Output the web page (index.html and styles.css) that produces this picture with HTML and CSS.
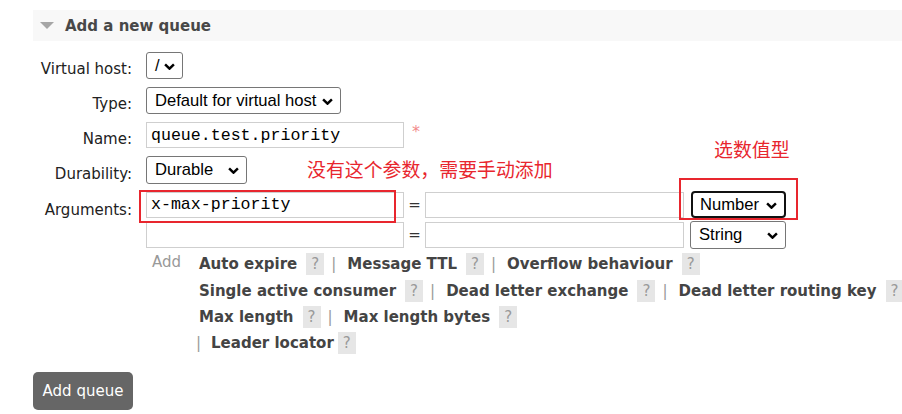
FILE: index.html
```html
<!DOCTYPE html>
<html>
<head>
<meta charset="utf-8">
<link rel="stylesheet" href="styles.css">
</head>
<body>
<div class="page">
  <div class="section-head">
    <span class="tri"></span>
    <h2 class="title">Add a new queue</h2>
  </div>

  <div class="form">
    <div class="lbl">Virtual host:</div>
    <div class="ctl">
      <div class="sel w-vhost"><span class="sel-text">/</span><svg class="chev" viewBox="0 0 10 6"><path d="M1 1 L5 5 L9 1" /></svg></div>
    </div>

    <div class="lbl">Type:</div>
    <div class="ctl">
      <div class="sel w-type"><span class="sel-text">Default for virtual host</span><svg class="chev" viewBox="0 0 10 6"><path d="M1 1 L5 5 L9 1" /></svg></div>
    </div>

    <div class="lbl">Name:</div>
    <div class="ctl">
      <div class="inp mono w-key">queue.test.priority</div>
      <span class="req">*</span>
    </div>

    <div class="lbl">Durability:</div>
    <div class="ctl">
      <div class="sel w-dur"><span class="sel-text">Durable</span><svg class="chev" viewBox="0 0 10 6"><path d="M1 1 L5 5 L9 1" /></svg></div>
      <span class="note note-args">没有这个参数，需要手动添加</span>
    </div>

    <div class="lbl lbl-args">Arguments:</div>
    <div class="ctl args">
      <div class="arg-row">
        <div class="inp mono w-key">x-max-priority</div>
        <span class="eq">=</span>
        <div class="inp w-val"></div>
        <div class="sel w-type2 focused"><span class="sel-text">Number</span><svg class="chev" viewBox="0 0 10 6"><path d="M1 1 L5 5 L9 1" /></svg></div>
      </div>
      <div class="arg-row">
        <div class="inp mono w-key"></div>
        <span class="eq">=</span>
        <div class="inp w-val"></div>
        <div class="sel w-type3"><span class="sel-text">String</span><svg class="chev" viewBox="0 0 10 6"><path d="M1 1 L5 5 L9 1" /></svg></div>
      </div>
      <div class="add-row">
        <span class="add">Add</span>
        <div class="links">
          <div class="line"><span class="lk">Auto expire</span><span class="help">?</span><span class="sep">|</span><span class="lk">Message TTL</span><span class="help">?</span><span class="sep">|</span><span class="lk">Overflow behaviour</span><span class="help">?</span></div>
          <div class="line"><span class="lk">Single active consumer</span><span class="help">?</span><span class="sep">|</span><span class="lk">Dead letter exchange</span><span class="help">?</span><span class="sep">|</span><span class="lk">Dead letter routing key</span><span class="help">?</span></div>
          <div class="line"><span class="lk">Max length</span><span class="help">?</span><span class="sep">|</span><span class="lk">Max length bytes</span><span class="help">?</span></div>
          <div class="line line-last"><span class="sep sep-lead">|</span><span class="lk">Leader locator</span><span class="help help-tight">?</span></div>
        </div>
      </div>
    </div>
  </div>

  <button class="btn">Add queue</button>

  <span class="note note-type">选数值型</span>
  <div class="mark mark-key"></div>
  <div class="mark mark-type"></div>
</div>
</body>
</html>
```

FILE: styles.css
```css
html, body {
  margin: 0;
  padding: 0;
  background: #fff;
}

.page {
  position: relative;
  width: 902px;
  height: 414px;
  overflow: hidden;
  font-family: "DejaVu Sans", Verdana, sans-serif;
  font-size: 15px;
  color: #222;
  padding-top: 10px;
  box-sizing: border-box;
}

.section-head {
  margin-left: 33px;
  height: 31px;
  background: #f8f8f8;
  display: flex;
  align-items: center;
}

.tri {
  width: 0;
  height: 0;
  margin-left: 7px;
  margin-right: 11px;
  border-left: 7px solid transparent;
  border-right: 7px solid transparent;
  border-top: 7px solid #a6a6a6;
}

.title {
  margin: 0;
  font-size: 15px;
  font-weight: bold;
  color: #484848;
}

.form {
  margin-top: 11px;
  display: grid;
  grid-template-columns: 132px auto;
  column-gap: 14px;
  row-gap: 8px;
  align-items: center;
}

.lbl {
  text-align: right;
  padding-top: 7px;
  color: #222;
}

.lbl-args {
  align-self: start;
  padding-top: 9px;
}

.ctl {
  display: flex;
  align-items: center;
}

.sel {
  position: relative;
  box-sizing: border-box;
  height: 27px;
  border: 1px solid #767676;
  border-radius: 3px;
  background: #fff;
  font-family: "Liberation Sans", Arial, sans-serif;
  font-size: 16.6px;
  color: #000;
  display: flex;
  align-items: center;
  padding-left: 8px;
}

.sel-text {
  white-space: nowrap;
}

.chev {
  position: absolute;
  right: 7px;
  top: 50%;
  width: 11px;
  height: 7px;
  margin-top: -3px;
  fill: none;
  stroke: #000;
  stroke-width: 2.2;
}

.w-vhost { width: 37px; }
.w-type { width: 195px; }
.w-dur { width: 101px; height: 28px; }
.w-type2 { width: 95px; height: 27px; margin-left: 7px; }
.w-type3 { width: 96px; height: 28px; margin-left: 6px; }

.focused {
  border: 2px solid #111;
  border-radius: 4px;
  padding-left: 7px;
}

.inp {
  box-sizing: border-box;
  height: 26px;
  border: 1px solid #cfcfcf;
  background: #fff;
  display: flex;
  align-items: center;
  padding-left: 4px;
}

.mono {
  font-family: "Liberation Mono", "Courier New", monospace;
  font-size: 16.6px;
  color: #000;
}

.w-key { width: 258px; }
.w-val { width: 259px; }

.req {
  color: #f28b8b;
  font-size: 16px;
  margin-left: 8px;
  margin-top: -8px;
}

.note {
  font-family: "Noto Sans CJK SC", sans-serif;
  font-size: 18.9px;
  line-height: 1;
  color: #e8262e;
  white-space: nowrap;
}

.note-args {
  margin-left: 60px;
  margin-top: -1px;
}

.note-type {
  position: absolute;
  left: 714px;
  top: 140px;
}

.args {
  flex-direction: column;
  align-items: flex-start;
  margin-top: -1px;
}

.arg-row {
  display: flex;
  align-items: center;
}

.arg-row + .arg-row {
  margin-top: 3px;
}

.eq {
  width: 21px;
  text-align: center;
  font-size: 15px;
  color: #333;
}

.add-row {
  display: flex;
  margin-top: 2px;
}

.add {
  color: #999;
  margin-left: 6px;
  width: 47px;
  padding-top: 2px;
}

.links {
  display: flex;
  flex-direction: column;
}

.line {
  display: flex;
  align-items: center;
  height: 26.4px;
  white-space: nowrap;
}

.lk {
  font-weight: bold;
  font-size: 15px;
  color: #444;
}

.help {
  display: inline-block;
  width: 18px;
  height: 22px;
  line-height: 22px;
  text-align: center;
  background: #e6e6e6;
  color: #999;
  margin-left: 9px;
}

.help-tight {
  margin-left: 4px;
}

.sep {
  color: #999;
  margin-left: 7px;
  margin-right: 11px;
}

.sep-lead {
  margin-left: -3px;
  margin-right: 10px;
}

.btn {
  display: block;
  margin-top: 15px;
  margin-left: 33px;
  width: 100px;
  height: 38px;
  border: none;
  border-radius: 5px;
  background: #666;
  color: #fff;
  font-family: "DejaVu Sans", Verdana, sans-serif;
  font-size: 15px;
  padding: 0;
}

.mark {
  position: absolute;
  border: 2px solid #e8262e;
  box-sizing: border-box;
}

.mark-key {
  left: 139px;
  top: 190px;
  width: 257px;
  height: 33px;
}

.mark-type {
  left: 679px;
  top: 178px;
  width: 119px;
  height: 42px;
}
```
